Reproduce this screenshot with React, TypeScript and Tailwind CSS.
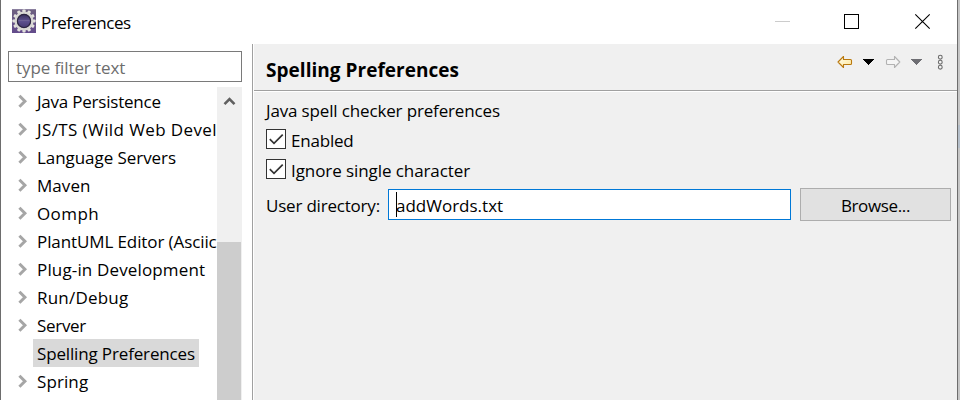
const tree = [
  { label: 'Java Persistence', fit: 'tracking-[-0.22px]' },
  { label: 'JS/TS (Wild Web Devel', fit: 'tracking-[0.4px]' },
  { label: 'Language Servers', fit: 'tracking-[-0.06px]' },
  { label: 'Maven', fit: 'tracking-[0.05px]' },
  { label: 'Oomph', fit: 'tracking-[0.4px]' },
  { label: 'PlantUML Editor (Asciic', fit: 'tracking-[-0.1px]' },
  { label: 'Plug-in Development', fit: 'tracking-[0.15px]' },
  { label: 'Run/Debug', fit: 'tracking-[0.2px]' },
  { label: 'Server', fit: 'tracking-[-0.3px]' },
  { label: 'Spelling Preferences', fit: 'tracking-[-0.15px]', selected: true },
  { label: 'Spring', fit: 'tracking-[0.1px]' },
];

const teeth = [0, 30, 60, 90, 120, 150, 180, 210, 240, 270, 300, 330];

function GearIcon() {
  return (
    <svg width="24" height="24" viewBox="0 0 24 24">
      <defs>
        <linearGradient id="tile" x1="0" y1="0" x2="0" y2="1">
          <stop offset="0" stopColor="#6e6180" />
          <stop offset="1" stopColor="#634b8c" />
        </linearGradient>
        <linearGradient id="core" x1="0" y1="0" x2="0" y2="1">
          <stop offset="0" stopColor="#2e2850" />
          <stop offset="0.5" stopColor="#5f5290" />
          <stop offset="1" stopColor="#41346b" />
        </linearGradient>
      </defs>
      <rect width="24" height="24" fill="url(#tile)" />
      <rect width="24" height="1" fill="#8b809f" />
      {teeth.map((a) => (
        <rect key={a} x="10.4" y="0.4" width="3.2" height="4" rx="0.8" fill="#e3e2de" transform={`rotate(${a} 12 12)`} />
      ))}
      <circle cx="12" cy="12" r="8.3" fill="url(#core)" stroke="#d8d7d3" strokeWidth="2.6" />
      <circle cx="12" cy="12" r="6.6" fill="none" stroke="#2c2540" strokeWidth="1.2" />
      <path d="M6.5 11.5h11" stroke="#6e6296" strokeWidth="1" />
    </svg>
  );
}

function Check({ label, fit }: { label: string; fit: string }) {
  return (
    <div className="flex h-[30px] items-center">
      <span className="h-5 w-5 shrink-0 border border-[#333] bg-white">
        <svg width="18" height="18" viewBox="0 0 18 18" fill="none" stroke="#333" strokeWidth="1.7">
          <path d="M2.8 9.2 7 13.3 15.7 4.6" />
        </svg>
      </span>
      <span className={`ml-[5px] pt-[3px] ${fit}`}>{label}</span>
    </div>
  );
}

function Toolbar() {
  return (
    <svg className="mt-2 shrink-0" width="110" height="20" viewBox="835 52 110 20">
      <defs>
        <linearGradient id="gold" x1="0" y1="0" x2="1" y2="1">
          <stop offset="0" stopColor="#fffef0" />
          <stop offset="1" stopColor="#ffe798" />
        </linearGradient>
      </defs>
      <path d="M838 62 843.5 56.5V59.5H850.5Q851.5 59.5 851.5 60.5V63.5Q851.5 64.5 850.5 64.5H843.5V67.5Z" fill="url(#gold)" stroke="#b9790f" strokeWidth="1.1" strokeLinejoin="round" />
      <path d="M863 59h11v1h-1v1h-1v1h-1v1h-1v1h-1v1h-1v-1h-1v-1h-1v-1h-1v-1h-1v-1h-1z" fill="#000" />
      <path d="M899.8 62 894.5 56.5V59.5H887.5Q886.5 59.5 886.5 60.5V63.5Q886.5 64.5 887.5 64.5H894.5V67.5Z" fill="#f5f5f5" stroke="#b2b2b2" strokeWidth="1.1" strokeLinejoin="round" />
      <path d="M911 59h11v1h-1v1h-1v1h-1v1h-1v1h-1v1h-1v-1h-1v-1h-1v-1h-1v-1h-1v-1h-1z" fill="#6e6e73" />
      <g fill="#f4f4f4" stroke="#6b6b6b" strokeWidth="1.1">
        <circle cx="940.3" cy="57.2" r="1.9" />
        <circle cx="940.3" cy="62.2" r="1.9" />
        <circle cx="940.3" cy="67.2" r="1.9" />
      </g>
    </svg>
  );
}

export default function App() {
  return (
    <div className="flex h-[400px] w-[960px] overflow-hidden bg-[#c6c6c6] font-['Open_Sans','Noto_Sans',sans-serif] text-[17px] leading-7 text-black">
      <div className="w-px shrink-0 bg-[#6d6d6d]" />
      <div className="flex min-w-0 flex-1 flex-col bg-white">
        <header className="flex h-11 shrink-0 items-start">
          <div className="mt-[9px] ml-[11px]"><GearIcon /></div>
          <span className="mt-[9px] ml-[5px] flex-1 tracking-[-0.45px]">Preferences</span>
          <svg className="mt-3 mr-[24px]" width="160" height="20" viewBox="773 12 160 20" fill="none">
            <path d="M775 21.5h15" stroke="#ccc" />
            <rect x="844.5" y="14.5" width="14" height="14" stroke="#000" />
            <path d="m915.3 14.3 14.4 14.4M929.7 14.3l-14.4 14.4" stroke="#000" strokeWidth="1.1" />
          </svg>
        </header>
        <div className="flex min-h-0 flex-1">
          <aside className="flex w-[251px] shrink-0 flex-col pt-[7px] pr-[9px] pl-[7px]">
            <div className="flex h-[31px] w-[234px] shrink-0 items-center border border-[#7a7a7a] pt-0.5 pl-[7px] tracking-[-0.1px] text-[#6d6d6d]">type filter text</div>
            <div className="mt-[5px] flex min-h-0 w-[234px] flex-1">
              <ul className="w-[209px] shrink-0">
                {tree.map((item) => (
                  <li key={item.label} className="flex h-7 items-center whitespace-nowrap">
                    <span className="flex w-[25px] shrink-0 pl-[10px]">
                      {!item.selected && (
                        <svg width="10" height="14" viewBox="0 0 10 14" fill="none" stroke="#a6a6a6" strokeWidth="3">
                          <path d="M1.4 1.8 6.9 7.3 1.4 12.8" />
                        </svg>
                      )}
                    </span>
                    <span className={`h-7 px-1 pt-px ${item.fit} ${item.selected ? 'bg-[#d9d9d9]' : ''}`}>{item.label}</span>
                  </li>
                ))}
              </ul>
              <div className="flex w-[25px] shrink-0 flex-col bg-[#f0f0f0]">
                <svg width="25" height="155" viewBox="0 0 25 155" className="shrink-0" fill="none" stroke="#606060" strokeWidth="2.6">
                  <path d="m7.5 17.2 5-5 5 5" />
                </svg>
                <div className="w-6 flex-1 bg-[#cdcdcd]" />
              </div>
            </div>
          </aside>
          <div className="w-px shrink-0 bg-[#a0a0a0]" />
          <main className="ml-px flex min-w-0 flex-1 flex-col bg-[#f0f0f0]">
            <div className="flex h-[46px] shrink-0 items-start justify-between pr-3 pl-3">
              <h1 className="mt-3 text-[19px] font-bold tracking-[0.03px]">Spelling Preferences</h1>
              <Toolbar />
            </div>
            <div className="h-0.5 shrink-0 border-t border-[#a0a0a0] bg-white" />
            <div className="flex flex-col pt-1 pr-1.5 pl-3">
              <div className="h-7 pt-px tracking-[-0.15px]">Java spell checker preferences</div>
              <Check label="Enabled" fit="tracking-[-0.2px]" />
              <Check label="Ignore single character" fit="tracking-[-0.08px]" />
              <div className="mt-[4px] flex h-[33px] items-center">
                <span className="w-[122px] shrink-0 pt-0.5 tracking-[-0.2px]">User directory:</span>
                <div className="flex h-[31px] w-[403px] items-center border border-[#0078d7] bg-white pl-[7px]">
                  <span className="h-[25px] w-px shrink-0 bg-black" />
                  <span className="-ml-px pt-0.5 tracking-[0px]">addWords.txt</span>
                </div>
                <button className="ml-[9px] h-[33px] w-[151px] border border-[#adadad] bg-[#e1e1e1] pt-[3px] tracking-[-0.35px]">Browse...</button>
              </div>
            </div>
          </main>
        </div>
      </div>
      <div className="w-px shrink-0 bg-[#6d6d6d]" />
      <div className="w-0.5 shrink-0 pt-[125px]">
        <div className="h-[23px] bg-[#b5bfca]" />
      </div>
    </div>
  );
}
